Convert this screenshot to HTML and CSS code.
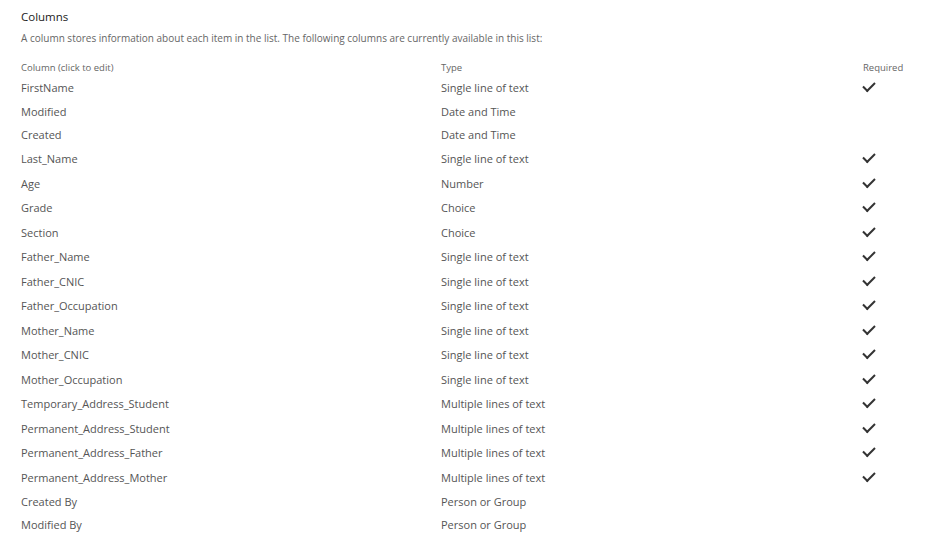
FILE: index.html
```html
<!DOCTYPE html>
<html lang="en">

<head>
    <meta charset="UTF-8">
    <title>Columns</title>
    <link rel="stylesheet" href="styles.css">
</head>

<body>
    <div class="cols_box">
        <div class="cols_title">Columns</div>
        <div class="cols_desc">A column stores information about each item in the list. The following columns are currently available in this list:</div>
        <table class="cols_table">
            <tr class="cols_head">
                <td class="c_name">Column (click to edit)</td>
                <td class="c_type">Type</td>
                <td class="c_req">Required</td>
            </tr>
            <tr class="req"><td>FirstName</td><td>Single line of text</td><td class="c_req"><i class="check"></i></td></tr>
            <tr><td>Modified</td><td>Date and Time</td><td></td></tr>
            <tr><td>Created</td><td>Date and Time</td><td></td></tr>
            <tr class="req"><td>Last_Name</td><td>Single line of text</td><td class="c_req"><i class="check"></i></td></tr>
            <tr class="req"><td>Age</td><td>Number</td><td class="c_req"><i class="check"></i></td></tr>
            <tr class="req"><td>Grade</td><td>Choice</td><td class="c_req"><i class="check"></i></td></tr>
            <tr class="req"><td>Section</td><td>Choice</td><td class="c_req"><i class="check"></i></td></tr>
            <tr class="req"><td>Father_Name</td><td>Single line of text</td><td class="c_req"><i class="check"></i></td></tr>
            <tr class="req"><td>Father_CNIC</td><td>Single line of text</td><td class="c_req"><i class="check"></i></td></tr>
            <tr class="req"><td>Father_Occupation</td><td>Single line of text</td><td class="c_req"><i class="check"></i></td></tr>
            <tr class="req"><td>Mother_Name</td><td>Single line of text</td><td class="c_req"><i class="check"></i></td></tr>
            <tr class="req"><td>Mother_CNIC</td><td>Single line of text</td><td class="c_req"><i class="check"></i></td></tr>
            <tr class="req"><td>Mother_Occupation</td><td>Single line of text</td><td class="c_req"><i class="check"></i></td></tr>
            <tr class="req"><td>Temporary_Address_Student</td><td>Multiple lines of text</td><td class="c_req"><i class="check"></i></td></tr>
            <tr class="req"><td>Permanent_Address_Student</td><td>Multiple lines of text</td><td class="c_req"><i class="check"></i></td></tr>
            <tr class="req"><td>Permanent_Address_Father</td><td>Multiple lines of text</td><td class="c_req"><i class="check"></i></td></tr>
            <tr class="req"><td>Permanent_Address_Mother</td><td>Multiple lines of text</td><td class="c_req"><i class="check"></i></td></tr>
            <tr><td>Created By</td><td>Person or Group</td><td></td></tr>
            <tr><td>Modified By</td><td>Person or Group</td><td></td></tr>
        </table>
    </div>
</body>

</html>
```

FILE: styles.css
```css
body {
    margin: 0;
    background-color: #fff;
    font-family: "Open Sans", "Noto Sans", sans-serif;
    color: #555;
}

.cols_box {
    padding: 8px 0 0 21px;
}

.cols_title {
    line-height: 18px;
    font-size: 11.5px;
    color: #222;
}

.cols_desc {
    margin-top: 4px;
    line-height: 16px;
    font-size: 10px;
    color: #666;
}

.cols_table {
    margin-top: 15px;
    border-collapse: collapse;
}

.cols_table td {
    height: 23.5px;
    padding: 0;
    font-size: 11px;
    white-space: nowrap;
    vertical-align: middle;
}

.cols_table .req td {
    height: 24.5px;
}

.cols_head td {
    height: 14px;
    font-size: 9.5px;
    color: #666;
    vertical-align: top;
}

.c_name {
    width: 420px;
}

.c_type {
    width: 422px;
}

.c_req {
    width: 60px;
}

.check {
    display: block;
    width: 10px;
    height: 5px;
    margin: -4px 0 0 0;
    border-left: 2px solid #333;
    border-bottom: 2px solid #333;
    transform: rotate(-45deg);
}
```
